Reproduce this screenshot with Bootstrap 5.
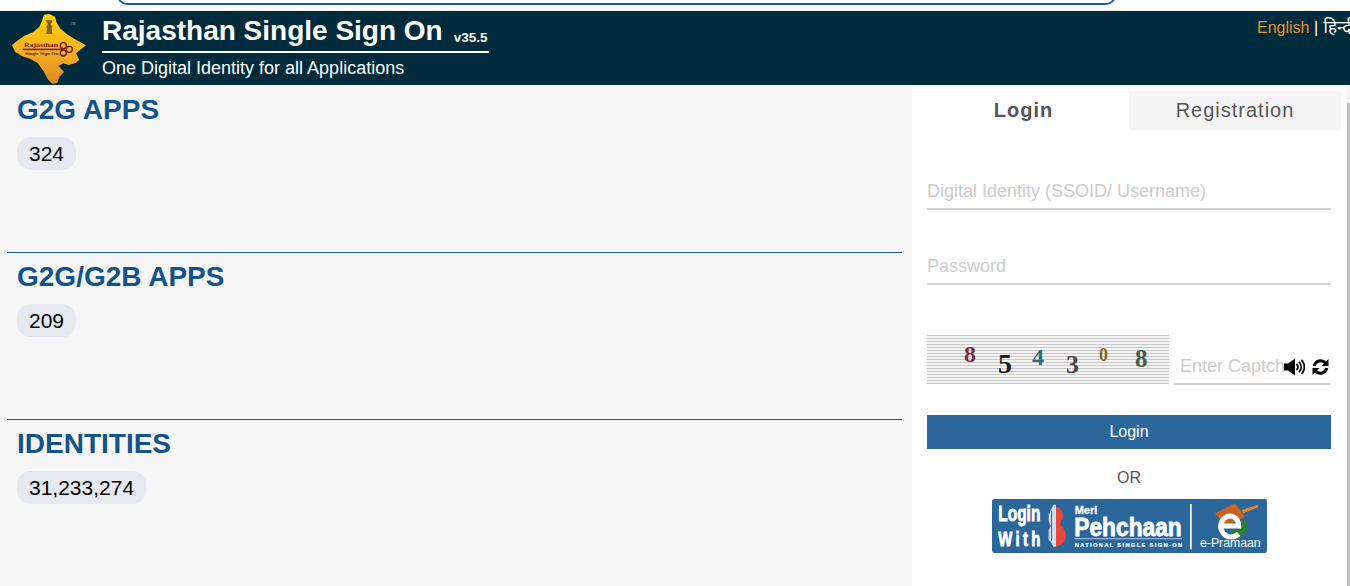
<!DOCTYPE html>
<html lang="en">
<head>
    <meta charset="UTF-8">
    <meta name="viewport" content="width=device-width, initial-scale=1.0">
    <title>Rajasthan Single Sign On</title>
    <link href="https://cdn.jsdelivr.net/npm/bootstrap@5.3.3/dist/css/bootstrap.min.css" rel="stylesheet">
    <style>
        html, body { height: 100%; overflow: hidden; }
        body {
            font-family: "Liberation Sans", "Noto Sans", Arial, sans-serif;
            background: #fff;
            width: 1350px;
        }
        .top-strip { height: 11px; padding-left: 117px; border-bottom: 1px solid #e8ebee; overflow: hidden; }
        .search-edge {
            width: 999px; height: 20px; margin-top: -15px;
            border: 2px solid #2458a8;
            border-radius: 20px;
        }
        .site-head { height: 74px; background: #002b3c; color: #fff; padding-left: 11px; }
        .site-logo { width: 78px; height: 74px; flex: none; }
        .site-titles { margin-left: 13px; width: 387px; }
        .site-name { height: 42px; border-bottom: 2px solid #fff; padding-top: 4px; white-space: nowrap; }
        .site-name b { font-size: 28px; line-height: 32px; }
        .site-ver { font-size: 13.5px; font-weight: 700; margin-left: 11px; position: relative; top: 2px; }
        .site-tag { font-size: 18px; line-height: 20px; margin-top: 5px; white-space: nowrap; }
        .lang-links {
            margin-left: auto; width: 93px; flex: none; overflow: hidden;
            white-space: nowrap; font-size: 16px; line-height: 20px; padding-top: 7px;
        }
        .lang-links a { color: #e8942a; text-decoration: none; }
        .lang-hi { font-size: 17px; margin-left: 1px; }
        .page-main { height: 501px; }
        .apps-side { width: 912px; flex: none; background: #f6f6f6; padding: 0 10px 0 7px; }
        .apps-block { height: 167px; padding: 8px 0 0 10px; border-bottom: 1px solid #1b5a8c; }
        .apps-block:first-child { height: 168px; padding-top: 9px; }
        .apps-block:last-child { border-bottom: 0; }
        .apps-title { font-size: 28px; line-height: 32px; font-weight: 700; color: #12538b; margin: 0 0 11px; }
        .apps-count {
            display: inline-block; font-size: 21px; line-height: 33px; padding: 0 12px;
            color: #000; background: #e6e9f0; border-radius: 14px;
        }
        .login-side { width: 427px; flex: none; padding: 6px 0 0 15px; }
        .tab-row { margin: 0 -2px 0 -15px; height: 39px; }
        .tab-item {
            flex: 1 1 0; text-align: center; font-size: 20px; line-height: 39px;
            letter-spacing: 1px; color: #555;
        }
        .tab-item.is-on { font-weight: 700; padding-left: 6px; }
        .tab-item.is-off { background: #f5f5f5; flex: 0 0 212px; }
        .line-input {
            display: block; width: 100%; border: 0; border-bottom: 2px solid #d2d2d2;
            background: transparent; outline: 0; padding: 0 0 2px; height: 34px;
            font-size: 18px; font-family: inherit; color: #555;
        }
        .line-input::placeholder { color: #ccc; opacity: 1; }
        .field-wrap { width: 404px; margin-top: 41px; }
        .field-wrap.is-first { margin-top: 46px; }
        .captcha-row { width: 404px; margin-top: 50px; height: 50px; }
        .captcha-pic {
            width: 242px; height: 49px; flex: none; position: relative;
            background: repeating-linear-gradient(180deg, #c9c9c9 0 1px, #f4f4f4 1px 3px);
            font-family: "Liberation Serif", serif; font-weight: 700;
        }
        .captcha-pic span { position: absolute; line-height: 1; }
        .captcha-pic span:nth-child(1) { left: 37px; top: 7px; font-size: 24px; color: #7a2f3e; }
        .captcha-pic span:nth-child(2) { left: 71px; top: 15px; font-size: 28px; color: #1d1b1b; }
        .captcha-pic span:nth-child(3) { left: 105px; top: 10px; font-size: 24px; color: #2f6b78; }
        .captcha-pic span:nth-child(4) { left: 139px; top: 17px; font-size: 26px; color: #4d4444; }
        .captcha-pic span:nth-child(5) { left: 172px; top: 11px; font-size: 18px; color: #7a6a2c; }
        .captcha-pic span:nth-child(6) { left: 208px; top: 11px; font-size: 25px; color: #47594d; }
        .captcha-field { margin-left: 5px; flex: 1; position: relative; height: 50px; }
        .captcha-field .line-input { height: 50px; padding: 14px 0 0 6px; }
        .captcha-tools { position: absolute; right: 2px; top: 23px; display: flex; gap: 7px; background: #fff; }
        .login-btn {
            display: block; width: 404px; margin-top: 30px; height: 34px; padding: 0; border: 0; border-radius: 0;
            background: #2b679b; color: #fff; font-size: 16px; line-height: 34px;
        }
        .or-text { width: 404px; text-align: center; font-size: 16px; line-height: 20px; color: #555; margin-top: 19px; }
        .pehchaan { display: block; width: 275px; height: 54px; margin: 11px 0 0 65px; }
        .scroll-edge { flex: 1; position: relative; }
        .scroll-edge::before {
            content: ""; position: absolute; left: 7px; top: 0; bottom: 0; right: 0; background: #f4f4f4;
        }
        .scroll-edge::after {
            content: ""; position: absolute; right: 0; top: 18px; bottom: 0; width: 3px; background: #c1c1c1;
        }
    </style>
</head>
<body>
    <div class="top-strip"><div class="search-edge"></div></div>

    <header class="site-head d-flex">
        <!-- viewBox in zoomed crop units, easier to trace the map -->
        <svg class="site-logo" viewBox="33 3 234 222">
            <defs>
                <linearGradient id="mapFill" x1="0" y1="0" x2="0" y2="1">
                    <stop offset="0" stop-color="#ffd000"/>
                    <stop offset=".5" stop-color="#f7b322"/>
                    <stop offset="1" stop-color="#e08a22"/>
                </linearGradient>
            </defs>
            <path fill="url(#mapFill)" d="M132 14L148 12L165 20L170 38L180 55L200 72L225 88L258 106L240 120L228 130L238 150L225 160L205 165L190 160L175 168L192 186L178 200L172 218L158 222L145 210L130 182L112 158L90 146L65 138L45 125L36 105L52 92L72 78L100 66L118 50L126 32Z"/>
            <path fill="#7a6420" d="M138 30h18v7l-4 4 3 6 3 4-3 3 2 18h-18l2-18-3-3 3-4 3-6-4-4z"/>
            <text x="72" y="111" font-family="Liberation Serif, serif" font-size="19" font-weight="700" fill="#6b1a10" textLength="102" lengthAdjust="spacingAndGlyphs">Rajasthan</text>
            <rect x="68" y="116" width="118" height="4.500" fill="#6b1a10"/>
            <text x="75" y="136" font-family="Liberation Serif, serif" font-size="14" font-weight="700" fill="#6b1a10" textLength="100" lengthAdjust="spacingAndGlyphs">Single Sign On</text>
            <g fill="none" stroke="#6b1a10" stroke-width="4">
                <circle cx="190" cy="107" r="9"/><circle cx="190" cy="129" r="9"/><circle cx="208" cy="118" r="9"/>
            </g>
            <text x="212" y="45" font-size="10" fill="#b9a468" font-family="Liberation Sans, sans-serif">TM</text>
        </svg>
        <div class="site-titles">
            <div class="site-name"><b>Rajasthan Single Sign On</b><span class="site-ver">v35.5</span></div>
            <div class="site-tag">One Digital Identity for all Applications</div>
        </div>
        <div class="lang-links"><a href="#">English</a> | <span class="lang-hi">हिन्दी</span></div>
    </header>

    <main class="page-main d-flex">
        <section class="apps-side">
            <div class="apps-block">
                <h2 class="apps-title">G2G APPS</h2>
                <span class="apps-count">324</span>
            </div>
            <div class="apps-block">
                <h2 class="apps-title">G2G/G2B APPS</h2>
                <span class="apps-count">209</span>
            </div>
            <div class="apps-block">
                <h2 class="apps-title">IDENTITIES</h2>
                <span class="apps-count">31,233,274</span>
            </div>
        </section>

        <section class="login-side">
            <div class="tab-row d-flex">
                <div class="tab-item is-on">Login</div>
                <div class="tab-item is-off">Registration</div>
            </div>
            <div class="field-wrap is-first">
                <input class="line-input" type="text" placeholder="Digital Identity (SSOID/ Username)">
            </div>
            <div class="field-wrap">
                <input class="line-input" type="password" placeholder="Password">
            </div>
            <div class="captcha-row d-flex">
                <div class="captcha-pic">
                    <span>8</span><span>5</span><span>4</span><span>3</span><span>0</span><span>8</span>
                </div>
                <div class="captcha-field">
                    <input class="line-input" type="text" placeholder="Enter Captcha">
                    <div class="captcha-tools">
                        <svg width="21" height="18" viewBox="0 0 21 18">
                            <path d="M0 5.500h4l7-5v17l-7-5H0z"/>
                            <g fill="none" stroke="#000" stroke-width="1.8" stroke-linecap="round">
                                <path d="M13 6.500a4 4 0 0 1 0 5"/>
                                <path d="M15.500 4.500a7 7 0 0 1 0 9"/>
                                <path d="M18 2.500a10 10 0 0 1 0 13"/>
                            </g>
                        </svg>
                        <svg width="17" height="18" viewBox="0 0 17 18">
                            <g fill="none" stroke="#000" stroke-width="3">
                                <path d="M2.200 8a6.500 6.500 0 0 1 11.300-3"/>
                                <path d="M14.800 10a6.500 6.500 0 0 1-11.300 3"/>
                            </g>
                            <path d="M16.500 1v7h-7z"/>
                            <path d="M.5 17v-7h7z"/>
                        </svg>
                    </div>
                </div>
            </div>
            <button class="btn login-btn" type="button">Login</button>
            <div class="or-text">OR</div>
            <!-- badge drawn at 3x crop units -->
            <svg class="pehchaan" viewBox="36 25 825 162">
                <rect x="36" y="25" width="825" height="162" rx="7" fill="#2b679b"/>
                <g font-family="Liberation Sans, sans-serif" font-weight="700" fill="#fff">
                    <text x="55" y="92" font-size="66" stroke="#fff" stroke-width="2.500" textLength="126" lengthAdjust="spacingAndGlyphs">Login</text>
                    <text transform="translate(55 166) scale(.72 1)" font-size="62" stroke="#fff" stroke-width="2.500" textLength="175" lengthAdjust="spacing">With</text>
                    <text x="284" y="70" font-size="34" stroke="#fff" stroke-width="1" textLength="68" lengthAdjust="spacingAndGlyphs">Meri</text>
                    <text x="283" y="136" font-size="78" stroke="#fff" stroke-width="2.500" textLength="322" lengthAdjust="spacingAndGlyphs">Pehchaan</text>
                    <text x="284" y="170" font-size="17" stroke="#fff" stroke-width=".6" textLength="322" lengthAdjust="spacing">NATIONAL SINGLE SIGN-ON</text>
                </g>
                <rect x="283" y="142" width="323" height="4" fill="#8fb0cf"/>
                <path fill="#cfdcec" d="M220 42h8v126h-8l-6-12-8-8v-30l6-12-6-14V72l8-16z"/>
                <path fill="#2b679b" d="M213 60h3v90h-3z"/>
                <path fill="#e9463c" d="M228 48c14 2 20 14 20 28 0 12-6 20-8 26 10 8 20 22 18 36-2 14-14 26-30 30z"/>
                <rect x="630" y="40" width="5" height="136" fill="#fff"/>
                <path fill="#c8641f" d="M705 68l60-30 30 40-58 28z"/>
                <path fill="#e0862a" d="M785 58l48-16 2 8-46 18z"/>
                <path fill="#2f7d3a" d="M775 96l24-10 2 36-30 24-36 2z"/>
                <path fill="none" stroke="#fff" stroke-width="15" d="M728 106h48c0-18-12-30-26-30s-28 14-28 31 14 32 30 32c9 0 17-3 24-9"/>
                <text x="660" y="170" font-family="Liberation Sans, sans-serif" font-size="36" fill="#fff" textLength="182" lengthAdjust="spacingAndGlyphs">e-Pramaan</text>
            </svg>
        </section>
        <div class="scroll-edge"></div>
    </main>

    <script src="https://cdn.jsdelivr.net/npm/bootstrap@5.3.3/dist/js/bootstrap.bundle.min.js"></script>
</body>
</html>
